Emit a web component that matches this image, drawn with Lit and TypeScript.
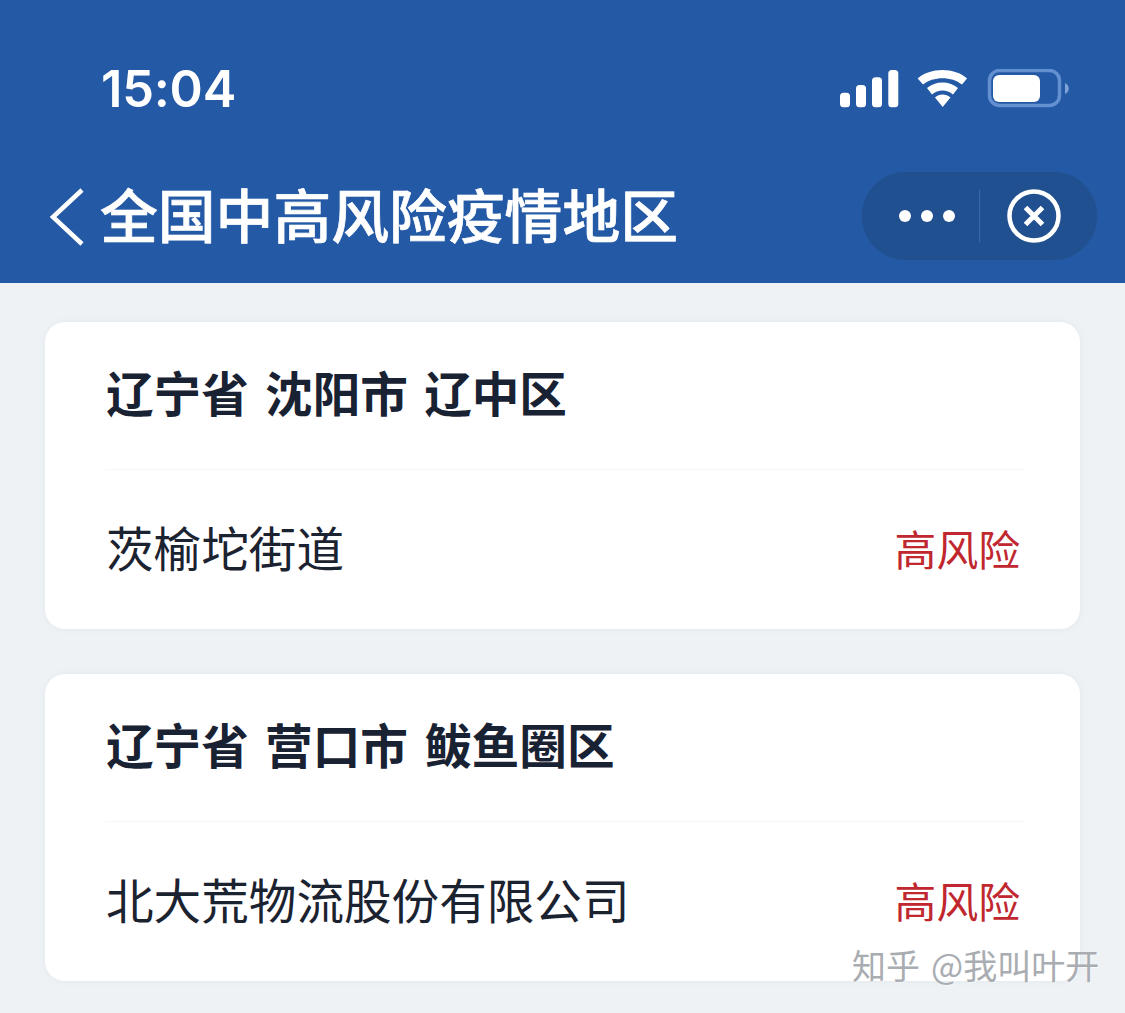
import { LitElement, html, css } from "lit";
import { customElement } from "lit/decorators.js";

const CJK = `"Noto Sans CJK SC", "Noto Sans", sans-serif`;

const DATA = [
  { title: "辽宁省 沈阳市 辽中区", place: "茨榆坨街道", risk: "高风险" },
  { title: "辽宁省 营口市 鲅鱼圈区", place: "北大荒物流股份有限公司", risk: "高风险" },
];

@customElement("app-root")
export class AppRoot extends LitElement {
  static styles = css`
    :host {
      display: block;
      width: 1125px;
      height: 1013px;
      overflow: hidden;
      position: relative;
      background: #eef2f5;
      font-family: ${css([CJK] as any as TemplateStringsArray)};
    }
    .head {
      height: 283px;
      box-sizing: border-box;
      background: #2459a5;
      color: #fff;
      display: flex;
      flex-direction: column;
    }
    .status {
      height: 64px;
      margin-top: 57px;
      padding: 0 55px 0 101px;
      display: flex;
      align-items: center;
      justify-content: space-between;
    }
    .time {
      font-family: Inter, "Liberation Sans", sans-serif;
      font-weight: 600;
      font-size: 50.5px;
      line-height: 64px;
      letter-spacing: -0.2px;
    }
    .icons {
      display: flex;
      align-items: center;
      gap: 0;
    }
    .nav {
      margin-top: 51px;
      height: 90px;
      padding: 0 28px 0 49px;
      display: flex;
      align-items: center;
    }
    .back { flex: none; display: block; margin-right: 15px; }
    .title {
      flex: 1;
      font-size: 57.8px;
      font-weight: 500;
      line-height: 82px;
      padding-bottom: 8px;
      white-space: nowrap;
      -webkit-text-stroke: 0.7px #fff;
    }
    .capsule {
      flex: none;
      width: 235px;
      height: 88px;
      margin-bottom: 2px;
      border-radius: 44px;
      background: #20508f;
      box-shadow: 0 0 0 1px #2558a0;
      display: flex;
      align-items: center;
    }
    .capsule .l {
      flex: 1;
      display: flex;
      align-items: center;
      justify-content: center;
      gap: 10px;
      padding-left: 12px;
    }
    .dot { width: 12px; height: 12px; border-radius: 50%; background: #fff; }
    .sep { width: 1px; height: 52px; background: #3a68a8; }
    .capsule .r { width: 117px; padding-right: 10px; box-sizing: border-box; display: flex; justify-content: center; }
    .list {
      padding: 39px 45px 0;
      display: flex;
      flex-direction: column;
      gap: 45px;
    }
    .card {
      height: 307px;
      background: #fff;
      border-radius: 20px;
      box-shadow: 0 0 6px rgba(120, 140, 165, 0.1);
      display: flex;
      flex-direction: column;
      padding: 0 60px 0 61px;
      box-sizing: border-box;
    }
    .ct {
      height: 148px;
      flex: none;
      box-sizing: border-box;
      padding-bottom: 9px;
      margin-right: -5px;
      display: flex;
      align-items: center;
      font-size: 47.6px;
      font-weight: 700;
      color: #192233;
      border-bottom: 1px solid #f6f7f8;
      white-space: pre;
      word-spacing: 5.5px;
    }
    .row {
      flex: 1;
      display: flex;
      align-items: center;
      justify-content: space-between;
      padding-bottom: 6px;
    }
    .place { font-size: 47.6px; color: #1b2230; white-space: nowrap; }
    .risk { font-size: 41.8px; color: #c1272f; white-space: nowrap; margin-top: 3px; }
    .mark {
      position: absolute;
      left: 852px;
      top: 941px;
      font-size: 34px;
      line-height: 48px;
      color: #a9adb2;
      white-space: pre;
      word-spacing: 3.500px;
      text-shadow: 1px 1px 1px rgba(255, 255, 255, 0.6);
    }
  `;

  render() {
    return html`
      <div class="head">
        <div class="status">
          <div class="time">15:04</div>
          <div class="icons">
            <svg width="230" height="40" viewBox="0 0 230 40">
              <g fill="#fff">
                <rect x="0" y="23.700" width="10" height="14.600" rx="3.500" />
                <rect x="16" y="16" width="10" height="22.300" rx="3.500" />
                <rect x="32" y="8.300" width="10" height="30" rx="3.500" />
                <rect x="48.300" y="1" width="10" height="37.300" rx="3.500" />
                <path d="M77.700 9.500 C90 -2 115 -2 127 9.500 L122 15.500 C112 7 93 7 83 15.500 Z" />
                <path d="M87 19 C95 11.500 110 11.500 118 19 L113 25.500 C107 20 98 20 92 25.500 Z" />
                <path d="M95 28.500 C99 24.500 106 24.500 110.500 28.500 L102.700 38 Z" />
              </g>
              <rect x="149.500" y="1.500" width="70" height="35" rx="10" fill="none" stroke="#6390d0" stroke-width="3.500" />
              <rect x="153" y="6" width="47" height="27" rx="6" fill="#fff" />
              <path d="M225 14 C230 16 230 23 225 25 Z" fill="#7ea3d6" />
            </svg>
          </div>
        </div>
        <div class="nav">
          <svg class="back" width="36" height="58" viewBox="0 0 36 58" fill="none">
            <path d="M33 2 L4 29 L33 56" stroke="#fff" stroke-width="4.500" />
          </svg>
          <div class="title">全国中高风险疫情地区</div>
          <div class="capsule">
            <div class="l">
              <span class="dot"></span><span class="dot"></span><span class="dot"></span>
            </div>
            <div class="sep"></div>
            <div class="r">
              <svg width="54" height="54" viewBox="0 0 54 54" fill="none" stroke="#fff">
                <circle cx="27" cy="27" r="24.500" stroke-width="4.500" />
                <path d="M18.500 18.500 L35.500 35.500 M35.500 18.500 L18.500 35.500" stroke-width="5" />
              </svg>
            </div>
          </div>
        </div>
      </div>
      <div class="list">
        ${DATA.map(
          (d) => html`
            <div class="card">
              <div class="ct">${d.title}</div>
              <div class="row">
                <span class="place">${d.place}</span>
                <span class="risk">${d.risk}</span>
              </div>
            </div>
          `
        )}
      </div>
      <div class="mark">知乎 @我叫叶开</div>
    `;
  }
}
